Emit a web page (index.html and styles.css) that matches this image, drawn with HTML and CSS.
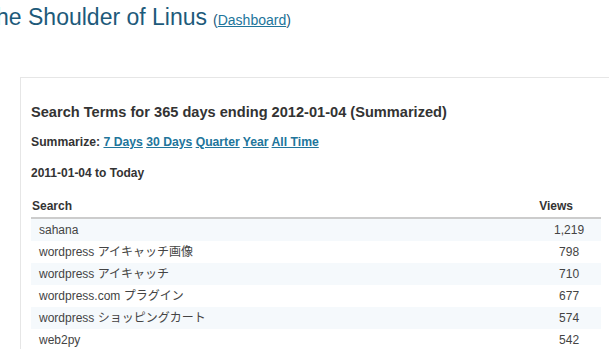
FILE: index.html
```html
<!DOCTYPE html>
<html lang="en">
<head>
<meta charset="utf-8">
<title>Search Terms</title>
<link rel="stylesheet" href="styles.css">
</head>
<body>
<header class="site-head">
  <h1 class="site-title">The Shoulder of Linus</h1>
  <span class="site-link">(<a href="#">Dashboard</a>)</span>
</header>
<main class="stats-box">
  <h3 class="stats-title">Search Terms for 365 days ending 2012-01-04 (Summarized)</h3>
  <p class="summarize">Summarize: <a href="#">7 Days</a> <a href="#">30 Days</a> <a href="#">Quarter</a> <a href="#">Year</a> <a href="#">All Time</a></p>
  <h4 class="range">2011-01-04 to Today</h4>
  <table class="terms">
    <thead>
      <tr><th class="col-term">Search</th><th class="col-views">Views</th></tr>
    </thead>
    <tbody>
      <tr class="alt"><td class="col-term">sahana</td><td class="col-views">1,219</td></tr>
      <tr><td class="col-term">wordpress アイキャッチ画像</td><td class="col-views">798</td></tr>
      <tr class="alt"><td class="col-term">wordpress アイキャッチ</td><td class="col-views">710</td></tr>
      <tr><td class="col-term">wordpress.com プラグイン</td><td class="col-views">677</td></tr>
      <tr class="alt"><td class="col-term">wordpress ショッピングカート</td><td class="col-views">574</td></tr>
      <tr><td class="col-term">web2py</td><td class="col-views">542</td></tr>
    </tbody>
  </table>
</main>
</body>
</html>
```

FILE: styles.css
```css
html, body {
  margin: 0;
  padding: 0;
  background: #fff;
  overflow: hidden;
}

body {
  font-family: "Liberation Sans", Arial, "Noto Sans CJK JP", sans-serif;
  color: #333;
}

a {
  color: #21759b;
}

.site-head {
  display: flex;
  align-items: baseline;
  gap: 6px;
  margin-left: -18px;
  padding-top: 3px;
  height: 74px;
}

.site-title {
  margin: 0;
  font-size: 23px;
  font-weight: normal;
  color: #1d5a7a;
  line-height: 28px;
  white-space: nowrap;
}

.site-link {
  font-size: 14px;
  color: #1d5a7a;
}

.stats-box {
  margin-left: 20px;
  width: 620px;
  border: 1px solid #e6e6e6;
  border-right: none;
  padding: 25px 0 40px 10px;
}

.stats-title {
  margin: 0 0 13px;
  font-size: 14.6px;
  line-height: 18px;
  font-weight: bold;
  color: #333;
}

.summarize {
  margin: 0 0 15px;
  font-size: 12.2px;
  line-height: 16px;
  font-weight: bold;
  color: #333;
}

.summarize a {
  color: #21759b;
}

.range {
  margin: 0 0 17px;
  font-size: 12px;
  line-height: 16px;
  font-weight: bold;
  color: #333;
}

.terms {
  width: 570px;
  border-collapse: collapse;
  font-size: 12px;
  font-family: "Liberation Sans", Arial, "Noto Sans CJK JP", sans-serif;
}

.terms th {
  text-align: left;
  font-weight: bold;
  color: #333;
  padding: 0 0 3px 1px;
  line-height: 16px;
  border-bottom: 2px solid #ccc;
}

.terms th.col-views {
  text-align: right;
  padding-right: 28px;
}

.terms td {
  height: 22px;
  padding: 0 0 0 8px;
  color: #444;
  line-height: 16px;
}

.terms td.col-views {
  text-align: center;
  width: 52px;
  padding: 0 1px 0 0;
}

.terms tr.alt td {
  background: #f5f9fc;
}
```
